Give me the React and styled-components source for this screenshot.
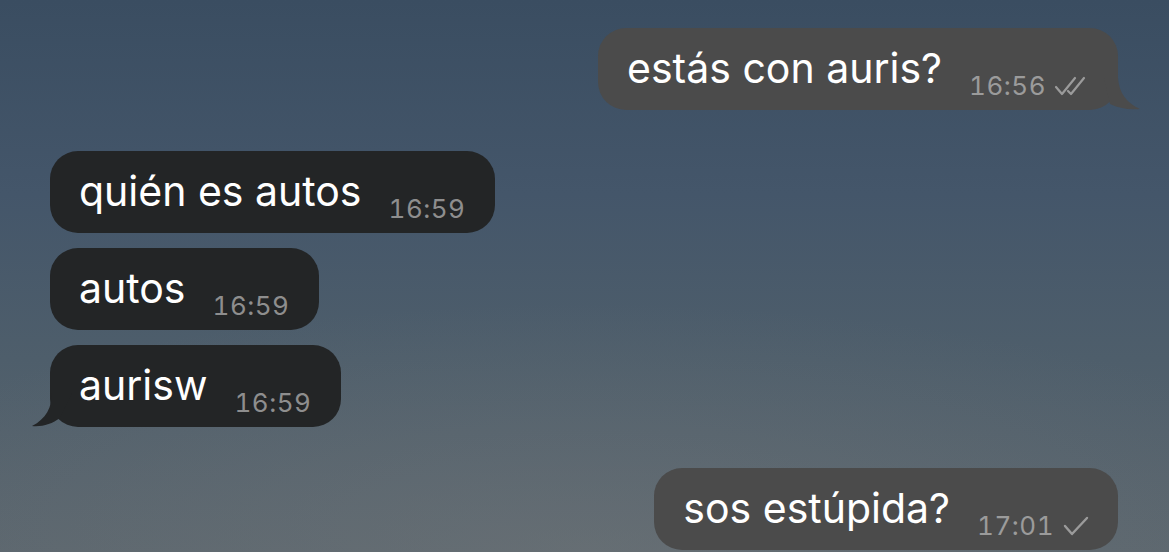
import React from "react";
import styled, { createGlobalStyle } from "styled-components";

const GlobalStyle = createGlobalStyle`
  html, body {
    margin: 0;
    padding: 0;
  }
  body {
    font-family: Inter, "Noto Sans", "Liberation Sans", sans-serif;
    -webkit-font-smoothing: antialiased;
  }
`;

const Screen = styled.div`
  width: 100%;
  height: 552px;
  overflow: hidden;
  background:
    radial-gradient(ellipse 70% 45% at 50% 100%, rgba(118, 122, 124, 0.4), rgba(118, 122, 124, 0) 100%),
    linear-gradient(180deg, #3a4d61 0%, #44566a 35%, #4e5e6b 65%, #5b666e 100%);
`;

const Thread = styled.div`
  display: flex;
  flex-direction: column;
  gap: 41px;
  padding: 28px 51px 0 50px;
`;

const Group = styled.div`
  display: flex;
  flex-direction: column;
  align-items: ${(p) => (p.out ? "flex-end" : "flex-start")};
  gap: 15px;
`;

const Bubble = styled.div`
  position: relative;
  display: flex;
  align-items: flex-end;
  height: 82px;
  box-sizing: border-box;
  padding: 20px 28px 11px 29px;
  border-radius: 28px;
  background: ${(p) => (p.out ? "#4b4b4b" : "#232526")};
`;

const Text = styled.span`
  font-size: 41px;
  line-height: 41px;
  color: #ffffff;
  margin-bottom: 10px;
  white-space: nowrap;
`;

const Meta = styled.span`
  display: flex;
  align-items: center;
  gap: 8px;
  margin-left: 27px;
  padding-right: ${(p) => (p.out ? "0" : "2px")};
  font-size: 26px;
  line-height: 26px;
  letter-spacing: 0.5px;
  font-variant-numeric: tabular-nums;
  color: ${(p) => (p.out ? "#9b9b9b" : "#8e8e8e")};
  white-space: nowrap;
`;

const Tail = styled.svg`
  position: absolute;
  bottom: 0;
  ${(p) => (p.out ? "right: -22px;" : "left: -18px;")}
`;

const OutTail = () => (
  <Tail out width="36" height="32" viewBox="0 0 36 32">
    <path d="M0 0 H14 C15 14 22 25 36 31 C24 32 14 30 6 26 Z" fill="#4b4b4b" />
  </Tail>
);

const InTail = () => (
  <Tail width="40" height="34" viewBox="0 0 40 34">
    <path d="M40 0 H20 C20 14 14 26 0 33 C10 34 20 31 28 25 Z" fill="#232526" />
  </Tail>
);

const DoubleCheck = () => (
  <svg width="36" height="20" viewBox="0 0 36 20" fill="none" stroke="#9b9b9b" strokeWidth="2.2" strokeLinecap="round" strokeLinejoin="round">
    <path d="M2 11 L8 18 L21 2" />
    <path d="M14 15 L17 18 L30 2" />
  </svg>
);

const SingleCheck = () => (
  <svg width="28" height="22" viewBox="0 0 28 22" fill="none" stroke="#9b9b9b" strokeWidth="2.4" strokeLinecap="round" strokeLinejoin="round">
    <path d="M3 11 L10 19 L25 3" />
  </svg>
);

const Message = ({ out, text, time, status, tail }) => (
  <Bubble out={out}>
    <Text>{text}</Text>
    <Meta out={out}>
      {time}
      {status === "read" && <DoubleCheck />}
      {status === "sent" && <SingleCheck />}
    </Meta>
    {tail && (out ? <OutTail /> : <InTail />)}
  </Bubble>
);

export default function App() {
  return (
    <>
      <GlobalStyle />
      <Screen>
        <Thread>
          <Group out>
            <Message out text="estás con auris?" time="16:56" status="read" tail />
          </Group>
          <Group>
            <Message text="quién es autos" time="16:59" />
            <Message text="autos" time="16:59" />
            <Message text="aurisw" time="16:59" tail />
          </Group>
          <Group out>
            <Message out text="sos estúpida?" time="17:01" status="sent" />
          </Group>
        </Thread>
      </Screen>
    </>
  );
}
